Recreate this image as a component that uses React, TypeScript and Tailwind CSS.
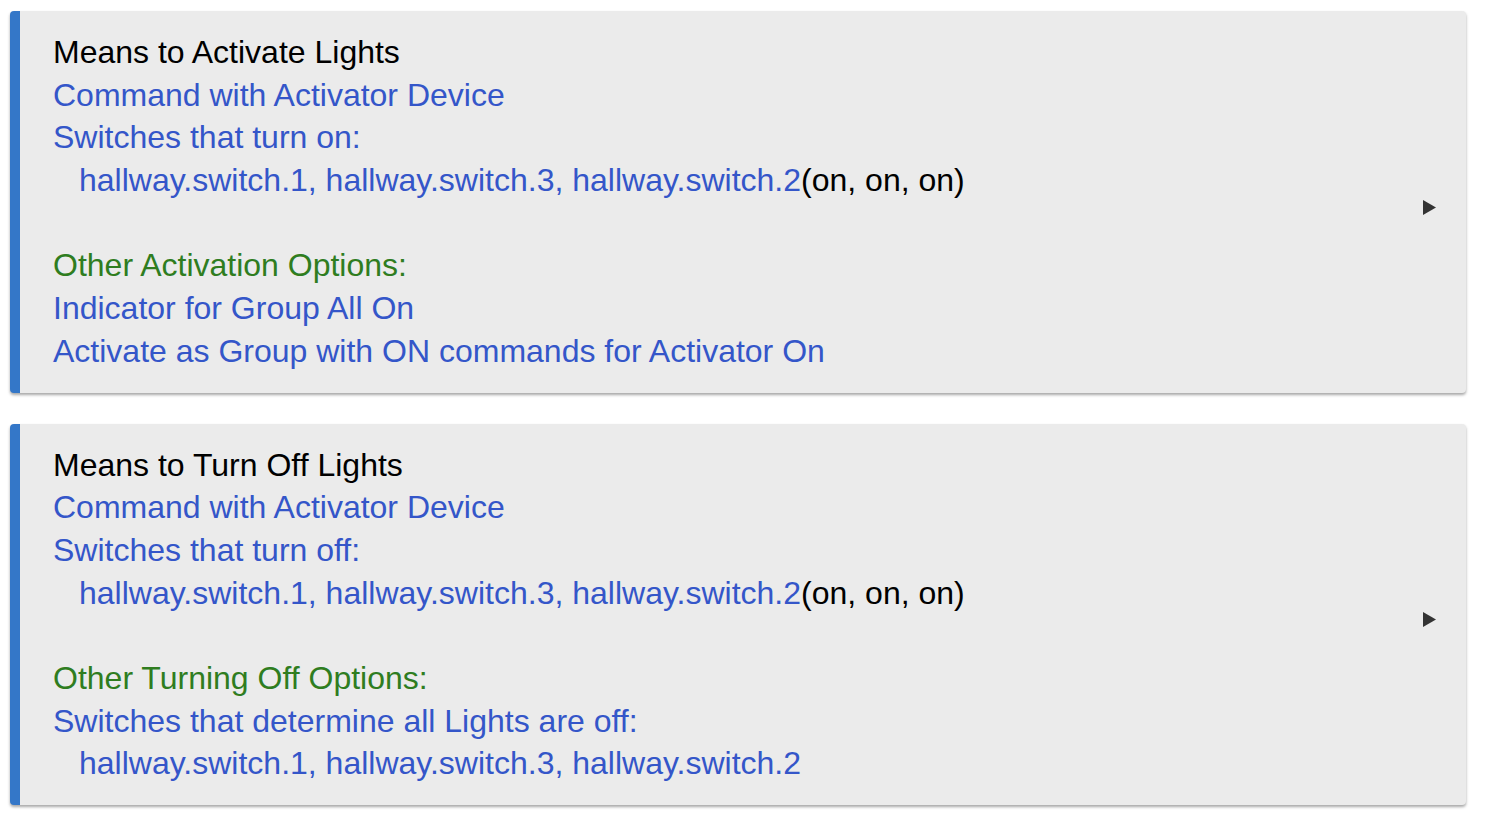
type Line = { kind: "title" | "link" | "green" | "blank"; text?: string; indent?: boolean; suffix?: string };

const cards: Line[][] = [
  [
    { kind: "title", text: "Means to Activate Lights" },
    { kind: "link", text: "Command with Activator Device" },
    { kind: "link", text: "Switches that turn on:" },
    { kind: "link", text: "hallway.switch.1, hallway.switch.3, hallway.switch.2", indent: true, suffix: "(on, on, on)" },
    { kind: "blank" },
    { kind: "green", text: "Other Activation Options:" },
    { kind: "link", text: "Indicator for Group All On" },
    { kind: "link", text: "Activate as Group with ON commands for Activator On" },
  ],
  [
    { kind: "title", text: "Means to Turn Off Lights" },
    { kind: "link", text: "Command with Activator Device" },
    { kind: "link", text: "Switches that turn off:" },
    { kind: "link", text: "hallway.switch.1, hallway.switch.3, hallway.switch.2", indent: true, suffix: "(on, on, on)" },
    { kind: "blank" },
    { kind: "green", text: "Other Turning Off Options:" },
    { kind: "link", text: "Switches that determine all Lights are off:" },
    { kind: "link", text: "hallway.switch.1, hallway.switch.3, hallway.switch.2", indent: true },
  ],
];

const colorFor = {
  title: "text-black",
  link: "text-[#3456c9]",
  green: "text-[#2f7d1f]",
  blank: "",
};

function Card({ lines }: { lines: Line[] }) {
  return (
    <div className="flex items-center rounded-[4px] border-l-[10px] border-[#3477c8] bg-[#ebebeb] shadow-[0_2px_3px_rgba(0,0,0,0.35)]">
      <div className="flex-1 py-[20px] pl-[33px]">
        {lines.map((l, i) =>
          l.kind === "blank" ? (
            <div key={i} className="h-[42.7px]" />
          ) : (
            <div key={i} className={`h-[42.7px] whitespace-nowrap ${l.indent ? "pl-[26px]" : ""} ${colorFor[l.kind]}`}>
              {l.text}
              {l.suffix ? <span className="text-black">{l.suffix}</span> : null}
            </div>
          )
        )}
      </div>
      <div className="mr-[29px] mt-[11px]">
        <svg width="15" height="17" viewBox="0 0 15 17">
          <path d="M1 1 L14 8.5 L1 16 Z" fill="#333" />
        </svg>
      </div>
    </div>
  );
}

export default function App() {
  return (
    <div
      className="flex min-h-[820px] flex-col gap-[31px] bg-white pb-[15px] pl-[10px] pr-[20px] pt-[11px] text-[32px] leading-[42.7px]"
      style={{ fontFamily: '"Liberation Sans", Arial, sans-serif' }}
    >
      {cards.map((c, i) => (
        <Card key={i} lines={c} />
      ))}
    </div>
  );
}
